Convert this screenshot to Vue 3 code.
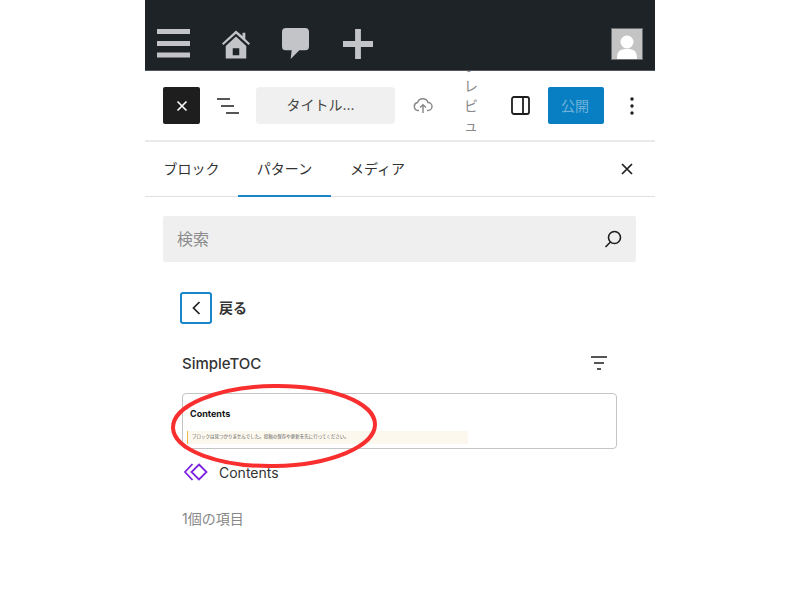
<script setup>
const tabs = [
  { label: 'ブロック', w: 93 },
  { label: 'パターン', w: 93, active: true },
  { label: 'メディア', w: 93 },
]
</script>

<template>
  <div class="page">
    <div class="phone">
      <header class="adminbar">
        <div class="admin-icons">
          <svg class="ab-menu" width="34" height="30" viewBox="0 0 34 30"><path d="M0 0h33v5H0zM0 12h33v5H0zM0 23.500h33v5H0z" fill="#c3c4c7"/></svg>
          <svg class="ab-home" width="28" height="29" viewBox="0 0 30 30"><path fill="#c3c4c7" d="M15 0 22 6V2.500h3V9l5 5-1.500 1.500L15 3.500 1.500 15.500 0 14zM4 16.500 15 6.500l11 10V30H4zM11.500 19v7.500h7V19z" fill-rule="evenodd"/></svg>
          <svg class="ab-comment" width="27" height="31" viewBox="0 0 28 32"><path fill="#c3c4c7" d="M4 0h20a4 4 0 0 1 4 4v15a4 4 0 0 1-4 4h-6l-9 9 1-9H4a4 4 0 0 1-4-4V4a4 4 0 0 1 4-4z"/></svg>
          <svg class="ab-plus" width="30" height="30" viewBox="0 0 31 31"><path fill="#c3c4c7" d="M12.500 0h6v12.500H31v6H18.500V31h-6V18.500H0v-6h12.500z"/></svg>
        </div>
        <div class="avatar">
          <svg width="30" height="30" viewBox="0 0 30 30"><rect width="30" height="30" fill="#c4c4c4"/><circle cx="15" cy="13" r="6.500" fill="#fff"/><path d="M5 30c0-8 3-10 10-10s10 2 10 10z" fill="#fff"/></svg>
        </div>
      </header>

      <div class="toolbar">
        <button class="close-btn">
          <svg width="12" height="12" viewBox="0 0 12 12"><path d="M1.500 1.500l9 9M10.500 1.500l-9 9" stroke="#fff" stroke-width="1.600"/></svg>
        </button>
        <svg class="listview" width="22" height="16" viewBox="0 0 22 16"><path d="M0 1h13M4 8h13M9 15h13" stroke="#1e1e1e" stroke-width="1.600" fill="none"/></svg>
        <div class="doc-title">タイトル...</div>
        <svg class="cloud" width="20" height="16" viewBox="0 0 20 16"><path d="M6 12.500H5a4 4 0 0 1-.5-7.900A5.500 5.500 0 0 1 15 4.500a4 4 0 0 1 0 8h-1M10 15V7M7 9.500 10 6.800l3 2.700" stroke="#8a8a8a" stroke-width="1.500" fill="none"/></svg>
        <div class="preview"><span>プレビュー</span></div>
        <svg class="sidebar-icon" width="19" height="19" viewBox="0 0 19 19"><rect x="1" y="1" width="17" height="17" rx="2" stroke="#1e1e1e" stroke-width="1.800" fill="none"/><path d="M12 1v17" stroke="#1e1e1e" stroke-width="1.800"/></svg>
        <button class="publish">公開</button>
        <svg class="more" width="4" height="18" viewBox="0 0 4 18"><circle cx="2" cy="2" r="1.700" fill="#1e1e1e"/><circle cx="2" cy="9" r="1.700" fill="#1e1e1e"/><circle cx="2" cy="16" r="1.700" fill="#1e1e1e"/></svg>
      </div>

      <nav class="tabs">
        <div v-for="t in tabs" :key="t.label" class="tab" :class="{ active: t.active }" :style="{ width: t.w + 'px' }">{{ t.label }}</div>
        <svg class="tab-close" width="12" height="12" viewBox="0 0 12 12"><path d="M1 1l10 10M11 1 1 11" stroke="#1e1e1e" stroke-width="1.700"/></svg>
      </nav>

      <div class="body">
        <div class="search">
          <span class="search-ph">検索</span>
          <svg width="18" height="18" viewBox="0 0 18 18"><circle cx="10.500" cy="7.500" r="6" stroke="#1e1e1e" stroke-width="1.600" fill="none"/><path d="M6.500 12 1.500 17" stroke="#1e1e1e" stroke-width="1.600"/></svg>
        </div>

        <div class="inner">
          <div class="back">
            <span class="back-btn">
              <svg width="9" height="14" viewBox="0 0 9 14"><path d="M7.500 1 1.500 7l6 6" stroke="#1e1e1e" stroke-width="1.700" fill="none"/></svg>
            </span>
            <span class="back-label">戻る</span>
          </div>

          <div class="group-head">
            <span class="group-title">SimpleTOC</span>
            <svg width="16" height="14" viewBox="0 0 16 14"><path d="M0 1h16M3 7h10M6 13h4" stroke="#1e1e1e" stroke-width="1.700"/></svg>
          </div>

          <div class="preview-card">
            <div class="card-title">Contents</div>
            <div class="notice">ブロックは見つかりませんでした。投稿の保存や更新を先に行ってください。</div>
          </div>

          <div class="pattern">
            <svg width="24" height="18" viewBox="0 0 24 18"><path d="M8.500 1 1 9l7.500 8M15 1.500 22.500 9 15 16.500 7.500 9z" stroke="#7b22e0" stroke-width="1.800" fill="none"/></svg>
            <span>Contents</span>
          </div>

          <div class="count">1個の項目</div>
        </div>
      </div>

      <svg class="circle" width="210" height="90" viewBox="0 0 210 90">
        <ellipse cx="103" cy="43" rx="101" ry="40" transform="rotate(-1 103 43)" fill="none" stroke="#f92f2f" stroke-width="4"/>
      </svg>
    </div>
  </div>
</template>

<style scoped>
.page {
  width: 800px;
  height: 600px;
  background: #fff;
  display: flex;
  justify-content: center;
  overflow: hidden;
  font-family: Inter, "Noto Sans CJK JP", sans-serif;
  color: #1e1e1e;
}
.phone {
  width: 510px;
  position: relative;
}
.adminbar {
  height: 42px;
  background: #1d2327;
  border-bottom: 1px solid #50565b;
  display: flex;
  align-items: flex-start;
  justify-content: space-between;
  padding: 28px 12px 0 12px;
}
.admin-icons {
  display: flex;
  align-items: center;
}
.ab-menu { margin-right: 31px; }
.ab-home { margin-right: 32px; margin-top: 2px; }
.ab-comment { margin-right: 34px; }
.avatar {
  width: 30px;
  height: 30px;
  border: 1px solid #6a6f73;
  display: flex;
}
.toolbar {
  height: 69px;
  display: flex;
  align-items: center;
  padding-left: 18px;
  overflow: hidden;
}
.close-btn {
  width: 37px;
  height: 37px;
  padding: 0;
  border: 0;
  border-radius: 2px;
  background: #1e1e1e;
  display: flex;
  align-items: center;
  justify-content: center;
}
.listview { margin-left: 17px; }
.doc-title {
  width: 139px;
  height: 37px;
  box-sizing: border-box;
  margin-left: 17px;
  padding: 0 10px 3px 0;
  border-radius: 4px;
  background: #f0f0f0;
  display: flex;
  align-items: center;
  justify-content: center;
  font-size: 14px;
  color: #444;
}
.cloud { margin-left: 18px; }
.preview {
  width: 14px;
  margin-left: 31px;
  font-size: 14px;
  line-height: 20px;
  color: #8a8a8a;
  word-break: break-all;
  text-align: center;
  height: 100px;
  display: flex;
  align-items: center;
  justify-content: center;
}
.sidebar-icon { margin-left: 33px; }
.publish {
  width: 56px;
  height: 37px;
  margin-left: 18px;
  padding: 0 2px 2px 0;
  border: 0;
  border-radius: 2px;
  background: #087fc2;
  color: #6fb3da;
  font-family: inherit;
  font-size: 14px;
}
.more { margin-left: 26px; }
.tabs {
  height: 54px;
  border-top: 2px solid #eaeaea;
  border-bottom: 1px solid #e0e0e0;
  display: flex;
  align-items: stretch;
}
.tab {
  display: flex;
  align-items: center;
  justify-content: center;
  font-size: 14px;
  color: #333;
  box-sizing: border-box;
  padding-bottom: 2px;
  margin-bottom: -1px;
  border-bottom: 2px solid transparent;
}
.tab.active { border-bottom-color: #1a86ca; }
.tab-close { margin: 21px 22px 0 auto; }
.body { padding: 19px 19px 0 18px; }
.search {
  height: 46px;
  background: #efefef;
  border-radius: 2px;
  display: flex;
  align-items: center;
  justify-content: space-between;
  padding: 0 14px 0 14px;
}
.search-ph {
  font-size: 16px;
  padding-bottom: 2px;
  color: #8c8c8c;
}
.inner { padding: 30px 19px 0 19px; }
.back {
  display: flex;
  align-items: center;
  gap: 7px;
  margin-left: -2px;
}
.back-btn {
  width: 32px;
  height: 32px;
  box-sizing: border-box;
  border: 2px solid #1a86ca;
  border-radius: 3px;
  display: flex;
  align-items: center;
  justify-content: center;
}
.back-label {
  font-size: 14px;
  font-weight: 700;
  padding-bottom: 2px;
  color: #333;
}
.group-head {
  margin-top: 29px;
  display: flex;
  align-items: center;
  justify-content: space-between;
  height: 20px;
  padding-right: 10px;
}
.group-title {
  font-size: 15px;
  font-weight: 500;
  color: #333;
}
.preview-card {
  margin-top: 20px;
  height: 56px;
  box-sizing: border-box;
  border: 1px solid #c4c4c4;
  border-radius: 4px;
  padding: 14px 0 0 4px;
  overflow: hidden;
}
.card-title {
  font-size: 9px;
  font-weight: 700;
  line-height: 12px;
  margin-left: 3px;
  color: #111;
}
.notice {
  margin-top: 11px;
  width: 281px;
  height: 13px;
  box-sizing: border-box;
  border-left: 1px solid #f0b849;
  background: #fcf8ee;
  padding-left: 4px;
  font-size: 4.500px;
  line-height: 12px;
  white-space: nowrap;
  color: #555;
}
.pattern {
  margin-top: 14px;
  height: 18px;
  display: flex;
  align-items: center;
  gap: 11px;
  font-size: 14px;
  color: #333;
}
.pattern svg { margin-left: 2px; }
.count {
  margin-top: 27px;
  font-size: 14px;
  color: #888;
}
.circle {
  position: absolute;
  left: 26px;
  top: 383px;
}
</style>
